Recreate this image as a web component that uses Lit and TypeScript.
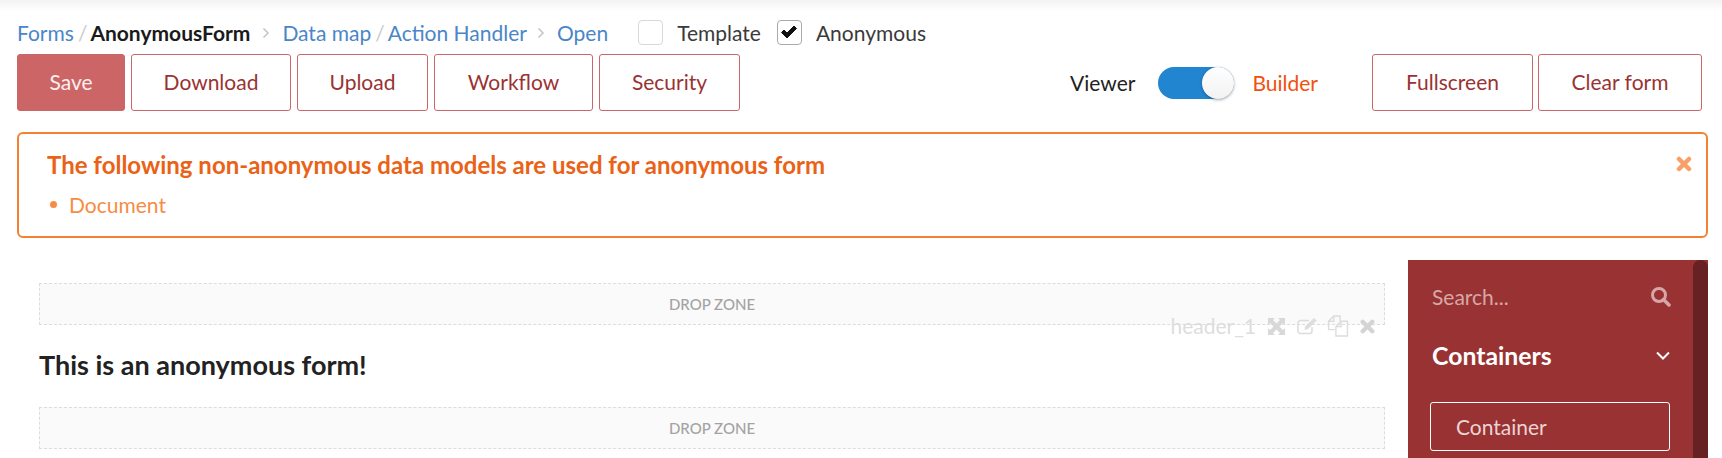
import { LitElement, html, css } from "lit";
import { customElement } from "lit/decorators.js";

@customElement("app-root")
export class AppRoot extends LitElement {
  static styles = css`
    :host { display: block; width: 1722px; height: 458px; overflow: hidden; position: relative; background: #fff; font-family: Lato, "Liberation Sans", sans-serif; font-size: 21px; color: #333; }
    .shade { height: 11px; margin-bottom: 9px; background: linear-gradient(#f3f3f3, #fff); }
    .crumbs { display: flex; align-items: center; height: 25px; margin-left: 17px; line-height: 25px; }
    a { color: #4a86c8; text-decoration: none; }
    .sl { color: #ccc; margin: 0 3px 0 4px; }
    .cur { color: #1a1a1a; font-weight: 700; }
    .gt { display: flex; margin: 0 12px 0 12px; }
    .gt.near { margin-left: 10px; }
    .checks { display: flex; align-items: center; margin-left: 30px; }
    .box { width: 25px; height: 25px; box-sizing: border-box; border: 1px solid #d8d8d8; border-radius: 4px; display: flex; align-items: center; justify-content: center; }
    .box.on { border-color: #aaa; }
    .chk-label { margin: 0 16px 0 14px; color: #3a3a3a; }
    .tools { display: flex; align-items: center; margin: 9px 20px 0 17px; height: 57px; }
    .btn { height: 57px; box-sizing: border-box; display: flex; align-items: center; justify-content: center; border: 1px solid #cc6666; border-radius: 3px; color: #993333; background: #fff; margin-right: 6px; padding-bottom: 2px; }
    .btn.save { background: #cc6666; color: #fdeeee; }
    .btn.tight { margin-right: 5px; }
    .spacer { flex: 1; }
    .viewer { color: #222; margin-right: 23px; }
    .switch { width: 76px; height: 32px; border-radius: 16px; background: #2185d0; position: relative; }
    .knob { position: absolute; right: 0; top: 0; width: 32px; height: 32px; border-radius: 50%; background: linear-gradient(#fff, #f2f2f2); box-shadow: 0 1px 3px rgba(0,0,0,.35); }
    .builder { color: #f2500f; margin: 0 54px 0 18px; }
    .tools .btn:last-child { margin-right: 0; }
    .alert { margin: 21px 14px 0 17px; height: 106px; box-sizing: border-box; border: 2px solid #f58033; border-radius: 6px; padding: 15px 28px; position: relative; }
    .alert h4 { margin: 0; font-size: 24px; line-height: 32px; font-weight: 700; color: #ea6216; }
    .alert ul { margin: 11px 0 0; padding: 0; list-style: none; }
    .alert li { display: flex; align-items: center; color: #f78c45; line-height: 25px; }
    .dot { width: 7px; height: 7px; border-radius: 50%; background: #f78c45; margin: 0 12px 0 3px; }
    .close { position: absolute; right: 14px; top: 22px; display: flex; }
    .main { display: flex; margin-top: 22px; margin-right: 14px; }
    .canvas { width: 1346px; margin: 23px 0 0 39px; position: relative; }
    .zone { height: 42px; box-sizing: border-box; border: 1px dashed #dcdcdc; background: #fafafa; display: flex; align-items: center; justify-content: center; font-size: 15px; font-weight: 500; color: #a3a3a3; padding-bottom: 1px; }
    h3 { margin: 0; font-size: 27px; line-height: 82px; font-weight: 700; color: #222; height: 82px; position: relative; top: -1px; }
    .ghost { position: absolute; right: 10px; top: 31px; display: flex; align-items: center; gap: 11px; color: #ddd; line-height: 24px; }
    .ghost svg { display: block; }
    .ghost .copy { margin-left: -2px; }
    .side { margin-left: 23px; width: 300px; height: 300px; background: #993333; position: relative; color: #fff; }
    .track { position: absolute; right: 0; top: 0; bottom: 0; width: 15px; background: #662222; border-radius: 7px 7px 0 0; }
    .search { display: flex; align-items: center; justify-content: space-between; height: 24px; margin: 24px 37px 0 24px; color: #d6a7a7; }
    .group { display: flex; align-items: center; justify-content: space-between; margin: 32px 38px 0 24px; height: 30px; font-size: 24.8px; font-weight: 700; color: #fff; }
    .item { margin: 32px 38px 0 22px; height: 49px; box-sizing: border-box; border: 1px solid #fff; border-radius: 3px; display: flex; align-items: center; padding-left: 25px; color: #ecd3d3; }
  `;

  private gt(near = false) {
    return html`<span class="gt ${near ? "near" : ""}"><svg width="8" height="12" viewBox="0 0 8 12" fill="none" stroke="#c4c4c4" stroke-width="1.5"><path d="M1.5 1.5 6 6l-4.500 4.500"/></svg></span>`;
  }

  render() {
    return html`
      <div class="shade"></div>
      <div class="crumbs">
        <a href="#">Forms</a><span class="sl">/</span><span class="cur">AnonymousForm</span>
        ${this.gt()}
        <a href="#">Data map</a><span class="sl">/</span><a href="#">Action Handler</a>
        ${this.gt(true)}
        <a href="#">Open</a>
        <div class="checks">
          <span class="box"></span><span class="chk-label">Template</span>
          <span class="box on"><svg width="18" height="15" viewBox="0 0 18 15"><path d="M1.500 7.500 4 5l3 3 7-7 2.500 2.500L7 13z" fill="#111" stroke="#111" stroke-width="1" stroke-linejoin="round"/></svg></span><span class="chk-label">Anonymous</span>
        </div>
      </div>
      <div class="tools">
        <div class="btn save" style="width:108px">Save</div>
        <div class="btn" style="width:160px">Download</div>
        <div class="btn" style="width:131px">Upload</div>
        <div class="btn" style="width:159px">Workflow</div>
        <div class="btn" style="width:141px">Security</div>
        <div class="spacer"></div>
        <span class="viewer">Viewer</span>
        <div class="switch"><div class="knob"></div></div>
        <span class="builder">Builder</span>
        <div class="btn tight" style="width:161px">Fullscreen</div>
        <div class="btn" style="width:164px">Clear form</div>
      </div>
      <div class="alert">
        <h4>The following non-anonymous data models are used for anonymous form</h4>
        <ul><li><span class="dot"></span>Document</li></ul>
        <span class="close"><svg width="16" height="16" viewBox="0 0 16 16"><path d="M3 3l10 10M13 3 3 13" stroke="#f9a06a" stroke-width="4.500" stroke-linecap="round"/></svg></span>
      </div>
      <div class="main">
        <div class="canvas">
          <div class="zone">DROP ZONE</div>
          <h3>This is an anonymous form!</h3>
          <div class="zone">DROP ZONE</div>
          <div class="ghost">
            <span>header_1</span>
            <svg width="19" height="19" viewBox="0 0 19 19" fill="#d8d8d8"><path d="M1 1h7L6 3l3.500 3.500 3.500-3.500-2-2h7v7l-2-2-3.500 3.500L16 13l2-2v7h-7l2-2-3.500-3.500L6 16l2 2H1v-7l2 2 3.500-3.500L3 6 1 8z"/></svg>
            <svg width="21" height="18" viewBox="0 0 21 18" fill="none" stroke="#dcdcdc" stroke-width="1.500"><path d="M15 10v4a2.500 2.500 0 0 1-2.500 2.500h-9A2.500 2.500 0 0 1 1 14V6a2.500 2.500 0 0 1 2.500-2.500H12"/><path d="M8 12.500l.7-3L17 1.500l2 2-8 8z" fill="#dcdcdc" stroke-width="1"/></svg>
            <svg class="copy" width="22" height="22" viewBox="0 0 20 21" fill="none" stroke="#dcdcdc" stroke-width="1.300"><path d="M7 14H1V6l5-5h6v5"/><path d="M6 1v5H1"/><path d="M8 11l5-5h6v14H8z"/><path d="M13 6v5H8"/></svg>
            <svg width="15" height="15" viewBox="0 0 14 14"><path d="M2.500 2.500l9 9M11.500 2.500l-9 9" stroke="#d4d4d4" stroke-width="4" stroke-linecap="round"/></svg>
          </div>
        </div>
        <aside class="side">
          <div class="track"></div>
          <div class="search">
            <span>Search...</span>
            <svg width="21" height="21" viewBox="0 0 21 21" fill="none" stroke="#d6a7a7"><circle cx="9" cy="9" r="6.500" stroke-width="3"/><path d="M13.500 13.500 19 19" stroke-width="3.500" stroke-linecap="round"/></svg>
          </div>
          <div class="group">
            <span>Containers</span>
            <svg width="14" height="9" viewBox="0 0 14 9" fill="none" stroke="#fff" stroke-width="2"><path d="M1 1.500l6 6 6-6"/></svg>
          </div>
          <div class="item">Container</div>
        </aside>
      </div>
    `;
  }
}
